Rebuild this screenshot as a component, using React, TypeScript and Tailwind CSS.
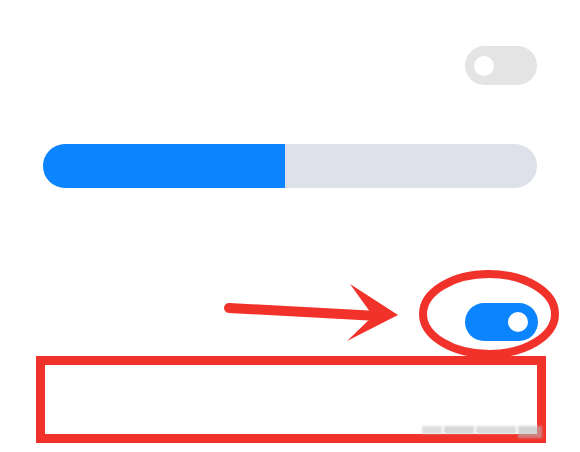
import React from "react";

function Toggle({ on }: { on: boolean }) {
  return (
    <div
      className={
        on
          ? "w-[73px] h-[38px] rounded-full bg-[#0b84fe] flex items-center justify-end pr-[10px]"
          : "w-[72px] h-[39px] rounded-full bg-[#e4e4e4] flex items-center justify-start pl-[9px]"
      }
    >
      <div className="w-[20px] h-[20px] rounded-full bg-white" />
    </div>
  );
}

export default function App() {
  return (
    <div className="relative w-[580px] h-[452px] bg-white overflow-hidden" style={{ fontFamily: "'Liberation Sans', sans-serif" }}>
      <div className="flex flex-col px-[43px]">
        <div className="flex justify-end pt-[46px]">
          <Toggle on={false} />
        </div>
        <div className="mt-[59px] h-[44px] w-full rounded-full bg-[#dfe1ea] overflow-hidden flex">
          <div className="w-[242px] h-full bg-[#0b84fe]" />
        </div>
        <div className="flex justify-end mt-[115px] -mr-[1px]">
          <Toggle on={true} />
        </div>
      </div>

      {/* annotation: arrow and ellipse */}
      <svg className="absolute left-0 top-0" width="580" height="452" viewBox="0 0 580 452">
        <line x1="229" y1="308" x2="378" y2="316" stroke="#f1322b" strokeWidth="10" strokeLinecap="round" />
        <path d="M350 284 L398 315 L347 341 L373 316 Z" fill="#f1322b" />
        <ellipse cx="489" cy="314" rx="66" ry="40" fill="none" stroke="#f1322b" strokeWidth="8" />
      </svg>

      {/* annotation: rectangle */}
      <div className="absolute left-[36px] top-[356px] w-[510px] h-[87px] border-[9px] border-[#f1322b]" />

      {/* watermark */}
      <div className="absolute left-[422px] top-[426px] flex gap-[2px] opacity-60 blur-[1px]">
        <div className="w-[20px] h-[8px] bg-[#c9c9c9]" />
        <div className="w-[30px] h-[8px] bg-[#bdbdbd]" />
        <div className="w-[40px] h-[8px] bg-[#c4c4c4]" />
        <div className="w-[24px] h-[12px] bg-[#b8b8b8]" />
      </div>
    </div>
  );
}
